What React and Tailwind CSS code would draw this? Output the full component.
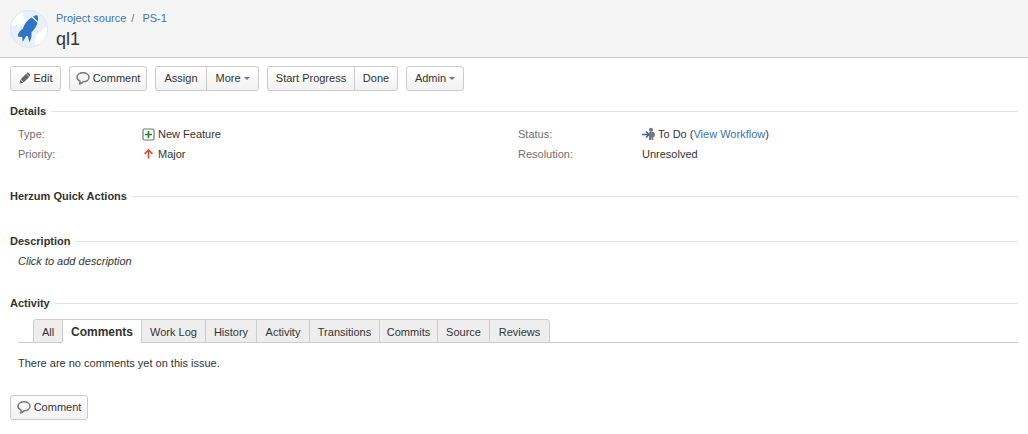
import React from 'react';

const activityTabs = [
  { name: 'All', width: 'w-[30px]' },
  { name: 'Comments', width: 'w-[80px]' },
  { name: 'Work Log', width: 'w-[65px]' },
  { name: 'History', width: 'w-[52px]' },
  { name: 'Activity', width: 'w-[54px]' },
  { name: 'Transitions', width: 'w-[71px]' },
  { name: 'Commits', width: 'w-[59px]' },
  { name: 'Source', width: 'w-[53px]' },
  { name: 'Reviews', width: 'w-[61px]' }
];

const ProjectAvatar = () => (
  <svg width="38" height="38" viewBox="0 0 38 38" className="shrink-0" aria-hidden="true">
    <defs>
      <clipPath id="avatar-circle">
        <circle cx="19" cy="19" r="18.5" />
      </clipPath>
    </defs>
    <g clipPath="url(#avatar-circle)">
      <rect width="38" height="38" fill="#e9f0f9" />
      <path d="M0 15V5L6 0h4c3 1 4 4 2 6 3 1 4 4 3 6-1 3-4 4-6 2-2 2-6 2-9 1z" fill="#fff" />
      <path d="M38 17c-4 0-6 2-6 5-4 0-7 3-6 6-2 1-2 5 0 7l3 3h9z" fill="#fff" />
    </g>
    <circle cx="19" cy="19" r="18.5" fill="none" stroke="#e3e6ea" />
    <path d="M23 6.600c1.300-.9 2.700-1.300 4.400-1.300.7 1.900.8 4 .4 6.300z" fill="#2f75c1" />
    <path d="M21.800 7.400l5.700 5.400c-.8 3-2.700 6.200-6.100 9.800.6 3.600-.3 7-2.100 9.600l-1.400-6-1.600-.3-3.600 6-.6-4.900-4.400-.6c.2-3.200 2-5.800 5.200-7.700 1.300-4.800 4.500-9 8.900-11.300z" fill="#2f75c1" />
  </svg>
);

const PencilIcon = () => (
  <svg width="12" height="12" viewBox="0 0 12 12" fill="#666" aria-hidden="true">
    <path d="M.5 11.500l.8-3.800 3 3zM1.700 7.200l5.400-5.400 3.100 3.100-5.400 5.400zM7.500 1.400l.8-.8c.8-.7 3.700 2 3 3l-.7.900z" />
  </svg>
);

const BubbleIcon = () => (
  <svg width="14" height="14" viewBox="0 0 14 14" fill="none" stroke="#777" strokeWidth="1.500" strokeLinejoin="round" aria-hidden="true">
    <path d="M3.800 10C2 9.100 1 7.900 1 6.300c0-2.700 2.600-4.500 6-4.500s6 1.800 6 4.500-2.600 4.500-6 4.500c-.6 1-1.800 1.800-3.400 2.100.6-.8.700-1.900.2-2.900z" />
  </svg>
);

const CaretIcon = () => (
  <svg width="6" height="3" viewBox="0 0 6 3" fill="#777" aria-hidden="true">
    <path d="M0 0h6L3 3z" />
  </svg>
);

const NewFeatureIcon = () => (
  <svg width="13" height="13" viewBox="0 0 13 13" fill="none" aria-hidden="true">
    <rect x="1" y="1" width="11" height="11" rx="1.500" fill="#fff" stroke="#777" strokeWidth="1.200" />
    <path d="M6.500 3v7M3 6.500h7" stroke="#1a8a2c" strokeWidth="1.700" />
  </svg>
);

const MajorIcon = () => (
  <svg width="13" height="13" viewBox="0 0 13 13" fill="none" stroke="#dd4b3c" strokeWidth="1.600" aria-hidden="true">
    <path d="M6.500 10.500V2M2.600 5.900l3.900-3.900 3.900 3.900" />
  </svg>
);

const StatusIcon = () => (
  <svg width="13" height="14" viewBox="0 0 13 14" aria-hidden="true">
    <path d="M7.200 4.800h3.600c1.200 0 2 .8 2 1.900v3h-1.500V13H9.500v-2.500H9V13H7z" fill="#777" />
    <circle cx="9" cy="2.800" r="2" fill="#777" />
    <path d="M0 7.500h6.500M4 4.500l3 3-3 3" fill="none" stroke="#42698f" strokeWidth="1.700" />
  </svg>
);

const ToolbarButton = ({ width, shape = 'rounded-[3px]', children }) => (
  <button
    type="button"
    className={`flex h-[25px] items-center justify-center gap-[3px] whitespace-nowrap border border-[#ccc] bg-linear-to-b from-white to-[#f2f2f2] pb-px ${width} ${shape}`}
  >
    {children}
  </button>
);

const SectionHeading = ({ children }) => (
  <h2 className="flex items-center gap-[5px] font-bold after:h-px after:flex-1 after:bg-[#e2e2e2]">
    {children}
  </h2>
);

const App = () => {
  const [activeTab, setActiveTab] = React.useState('Comments');

  return (
    <div className="bg-white font-['Liberation_Sans',Arial,sans-serif] text-[11px] leading-4 text-[#333]">
      {/* Issue header */}
      <header className="flex gap-2 border-b border-[#ccc] bg-[#f5f5f5] px-[10px] pt-[10px] pb-[5px]">
        <ProjectAvatar />
        <div>
          <nav aria-label="Breadcrumb" className="flex text-[#3b73af]">
            <a href="#project">Project source</a>
            <span className="mx-[5px] text-[#707070]">/</span>
            <a href="#issue" className="ml-[3px]">PS-1</a>
          </nav>
          <h1 className="text-[18px] leading-[26px]">ql1</h1>
        </div>
      </header>

      {/* Operations */}
      <div className="flex flex-wrap gap-2 px-[10px] pt-2">
        <ToolbarButton width="w-[51px]"><PencilIcon />Edit</ToolbarButton>
        <ToolbarButton width="w-[78px]"><BubbleIcon />Comment</ToolbarButton>
        <div className="flex -space-x-px">
          <ToolbarButton width="w-[52px]" shape="rounded-l-[3px]">Assign</ToolbarButton>
          <ToolbarButton width="w-[53px]" shape="rounded-r-[3px]">More <CaretIcon /></ToolbarButton>
        </div>
        <div className="flex -space-x-px">
          <ToolbarButton width="w-[88px]" shape="rounded-l-[3px]">Start Progress</ToolbarButton>
          <ToolbarButton width="w-[44px]" shape="rounded-r-[3px]">Done</ToolbarButton>
        </div>
        <ToolbarButton width="w-[58px]">Admin <CaretIcon /></ToolbarButton>
      </div>

      <main className="px-[10px] pt-3 pb-4">
        <section>
          <SectionHeading>Details</SectionHeading>
          <div className="grid grid-cols-2 pt-[5px] pr-2 pl-2">
            <dl className="grid grid-cols-[124px_1fr] leading-5">
              <dt className="text-[#707070]">Type:</dt>
              <dd className="flex items-center gap-[3px]"><NewFeatureIcon />New Feature</dd>
              <dt className="text-[#707070]">Priority:</dt>
              <dd className="flex items-center gap-[3px]"><MajorIcon />Major</dd>
            </dl>
            <dl className="grid grid-cols-[124px_1fr] pl-1 leading-5">
              <dt className="text-[#707070]">Status:</dt>
              <dd className="flex items-center gap-[3px]">
                <StatusIcon />
                <span>To Do (<a href="#workflow" className="text-[#3b73af]">View Workflow</a>)</span>
              </dd>
              <dt className="text-[#707070]">Resolution:</dt>
              <dd>Unresolved</dd>
            </dl>
          </div>
        </section>

        <section className="pt-6">
          <SectionHeading>Herzum Quick Actions</SectionHeading>
        </section>

        <section className="pt-[29px]">
          <SectionHeading>Description</SectionHeading>
          <p className="pt-1 pl-2 italic">Click to add description</p>
        </section>

        <section className="pt-[26px]">
          <SectionHeading>Activity</SectionHeading>
          <div role="tablist" className="mt-2 ml-2 flex border-b border-[#ccc] pl-[15px]">
            {activityTabs.map((tab) => (
              <button
                key={tab.name}
                type="button"
                role="tab"
                aria-selected={activeTab === tab.name}
                onClick={() => setActiveTab(tab.name)}
                className={`-mr-px -mb-px h-6 border border-[#ccc] pt-px whitespace-nowrap first:rounded-tl-[3px] last:rounded-tr-[3px] ${tab.width} ${
                  activeTab === tab.name ? 'border-b-white bg-white text-xs font-bold' : 'bg-[#eee]'
                }`}
              >
                {tab.name}
              </button>
            ))}
          </div>
          <p className="pt-3 pl-2">There are no comments yet on this issue.</p>
        </section>

        <div className="pt-6">
          <ToolbarButton width="w-[78px]"><BubbleIcon />Comment</ToolbarButton>
        </div>
      </main>
    </div>
  );
};

export default App;
